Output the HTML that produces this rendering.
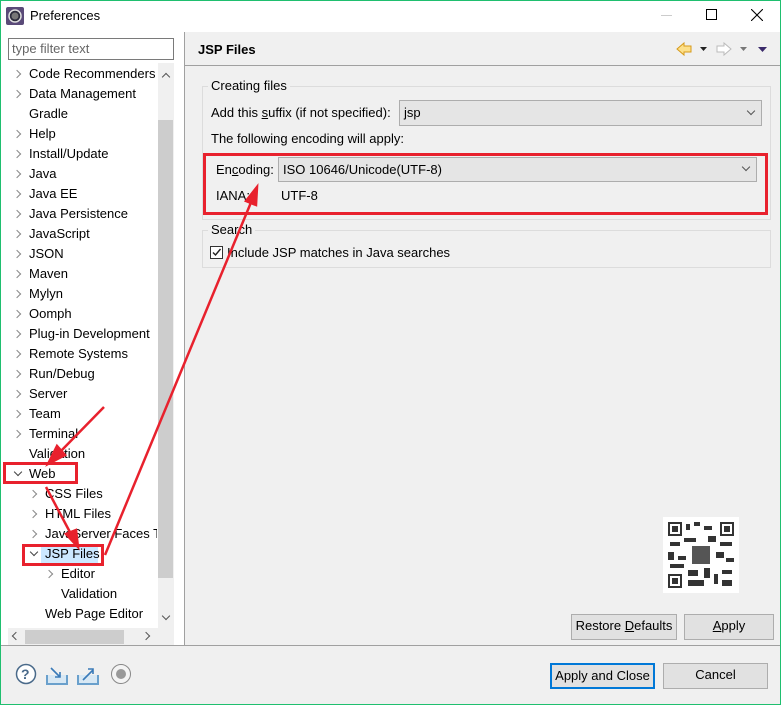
<!DOCTYPE html>
<html><head><meta charset="utf-8"><style>
*{margin:0;padding:0;box-sizing:border-box}
body{width:781px;height:705px;overflow:hidden;font-family:"Liberation Sans",sans-serif;font-size:13px;color:#000;background:#f0f0f0;position:relative}
.a{position:absolute;white-space:nowrap}
.chev{position:absolute;width:6px;height:6px;border-right:1.2px solid #888;border-bottom:1.2px solid #888}
.r{transform:rotate(-45deg)}
.d{transform:rotate(45deg)}
.btn{position:absolute;background:#e1e1e1;border:1px solid #adadad;text-align:center;line-height:22px}
u{text-decoration:underline}
</style></head><body>
<div class="a" style="left:1px;top:1px;width:779px;height:31px;background:#fff"></div>
<svg class="a" style="left:6px;top:7px" width="18" height="18"><rect x="0" y="0" width="18" height="18" rx="2" fill="#5a4a78"/><circle cx="9" cy="9" r="6" fill="#2c2c3c" stroke="#ddd" stroke-width="1.5"/><circle cx="9" cy="9" r="3.5" fill="#777"/></svg>
<div class="a" style="left:30px;top:8px;font-size:13px">Preferences</div>
<div class="a" style="left:661px;top:15px;width:11px;height:1px;background:#ccc"></div>
<div class="a" style="left:706px;top:9px;width:11px;height:11px;border:1px solid #000"></div>
<svg class="a" style="left:751px;top:9px" width="12" height="12"><path d="M0 0L12 12M12 0L0 12" stroke="#000" stroke-width="1.1"/></svg>
<!-- left pane -->
<div class="a" style="left:1px;top:32px;width:183px;height:613px;background:#fff"></div>
<div class="a" style="left:184px;top:32px;width:1px;height:613px;background:#a0a0a0"></div>
<div class="a" style="left:8px;top:38px;width:166px;height:22px;border:1px solid #7a7a7a;background:#fff;color:#666;padding-left:3px;line-height:20px">type filter text</div>
<div class="a" style="left:158px;top:63px;width:16px;height:565px;background:#f0f0f0"></div>
<div class="a" style="left:158px;top:120px;width:15px;height:458px;background:#cdcdcd"></div>
<div class="chev" style="left:163px;top:74px;transform:rotate(-135deg);border-color:#555"></div>
<div class="chev d" style="left:163px;top:613px;border-color:#555"></div>
<div class="a" style="left:8px;top:628px;width:166px;height:17px;background:#f0f0f0"></div>
<div class="a" style="left:25px;top:630px;width:99px;height:14px;background:#cdcdcd"></div>
<div class="chev" style="left:13px;top:633px;transform:rotate(135deg);border-color:#555"></div>
<div class="chev" style="left:143px;top:633px;transform:rotate(-45deg);border-color:#555"></div>
<div class="a" style="left:41px;top:545px;width:57px;height:18px;background:#cce8ff"></div>
<div id="tree"></div>
<script>
var items=[["Code Recommenders",1,0],["Data Management",1,0],["Gradle",0,0],["Help",1,0],["Install/Update",1,0],["Java",1,0],["Java EE",1,0],["Java Persistence",1,0],["JavaScript",1,0],["JSON",1,0],["Maven",1,0],["Mylyn",1,0],["Oomph",1,0],["Plug-in Development",1,0],["Remote Systems",1,0],["Run/Debug",1,0],["Server",1,0],["Team",1,0],["Terminal",1,0],["Validation",0,0],["Web",2,0],["CSS Files",1,1],["HTML Files",1,1],["JavaServer Faces Tools",1,1],["JSP Files",2,1],["Editor",1,2],["Validation",0,2],["Web Page Editor",0,1]];
var h="";items.forEach(function(it,i){var y=65+i*20,x=29+it[2]*16;
h+='<div class="a" style="left:'+x+'px;top:'+y+'px;width:'+(157-x)+'px;overflow:hidden;line-height:18px">'+it[0]+'</div>';
if(it[1]==1)h+='<div class="chev r" style="left:'+(x-15)+'px;top:'+(y+6)+'px"></div>';
if(it[1]==2)h+='<div class="chev d" style="left:'+(x-14)+'px;top:'+(y+4)+'px;border-color:#444"></div>';});
document.getElementById("tree").innerHTML=h;
</script>
<!-- right header -->
<div class="a" style="left:185px;top:32px;width:595px;height:34px;background:#f0f0f0;border-bottom:1px solid #a0a0a0"></div>
<div class="a" style="left:198px;top:42px;font-weight:bold;font-size:13px">JSP Files</div>
<svg class="a" style="left:676px;top:41px" width="100" height="16"><path d="M1 8L8 2V5H15V11H8V14Z" fill="#fde08a" stroke="#d69a1a"/><path d="M24 6h7l-3.5 4z" fill="#222"/><path d="M55 8L48 2V5H41V11H48V14Z" fill="#fff" stroke="#bbb"/><path d="M64 6h7l-3.5 4z" fill="#777"/><path d="M82 6h9l-4.5 5z" fill="#3a2a6a"/></svg>
<!-- Creating files group -->
<div class="a" style="left:202px;top:86px;width:569px;height:134px;border:1px solid #dcdcdc"></div>
<div class="a" style="left:208px;top:78px;background:#f0f0f0;padding:0 3px">Creating files</div>
<div class="a" style="left:211px;top:105px">Add this <u>s</u>uffix (if not specified):</div>
<div class="a" style="left:399px;top:100px;width:363px;height:26px;border:1px solid #adadad;background:#e5e5e5;padding-left:4px;line-height:24px">jsp</div>
<div class="chev d" style="left:748px;top:108px;border-color:#555"></div>
<div class="a" style="left:211px;top:131px">The following encoding will apply:</div>
<div class="a" style="left:216px;top:162px">En<u>c</u>oding:</div>
<div class="a" style="left:278px;top:157px;width:479px;height:25px;border:1px solid #adadad;background:#e5e5e5;padding-left:4px;line-height:23px">ISO 10646/Unicode(UTF-8)</div>
<div class="chev d" style="left:743px;top:164px;border-color:#555"></div>
<div class="a" style="left:216px;top:188px">IANA:</div>
<div class="a" style="left:281px;top:188px">UTF-8</div>
<div class="a" style="left:203px;top:153px;width:565px;height:62px;border:3px solid #e8212d"></div>
<!-- Search group -->
<div class="a" style="left:202px;top:230px;width:569px;height:38px;border:1px solid #dcdcdc"></div>
<div class="a" style="left:208px;top:222px;background:#f0f0f0;padding:0 3px">Search</div>
<div class="a" style="left:210px;top:246px;width:13px;height:13px;border:1px solid #333;background:#fff"></div>
<svg class="a" style="left:211px;top:247px" width="11" height="11"><path d="M2 5.5L4.5 8L9.5 2" stroke="#222" stroke-width="1.4" fill="none"/></svg>
<div class="a" style="left:227px;top:245px">Include JSP matches in Java searches</div>
<!-- QR -->
<div class="a" style="left:663px;top:517px;width:76px;height:76px;background:#fff"></div>
<svg class="a" style="left:668px;top:522px" width="66" height="66"><g fill="#333"><rect x="0" y="0" width="14" height="14"/><rect x="52" y="0" width="14" height="14"/><rect x="0" y="52" width="14" height="14"/></g><g fill="#fff"><rect x="2" y="2" width="10" height="10"/><rect x="54" y="2" width="10" height="10"/><rect x="2" y="54" width="10" height="10"/></g><g fill="#333"><rect x="4" y="4" width="6" height="6"/><rect x="56" y="4" width="6" height="6"/><rect x="4" y="56" width="6" height="6"/><rect x="18" y="2" width="4" height="6"/><rect x="26" y="0" width="6" height="4"/><rect x="36" y="4" width="8" height="4"/><rect x="2" y="20" width="10" height="4"/><rect x="16" y="16" width="12" height="4"/><rect x="40" y="14" width="8" height="6"/><rect x="52" y="20" width="12" height="4"/><rect x="0" y="30" width="6" height="8"/><rect x="10" y="34" width="8" height="4"/><rect x="48" y="30" width="8" height="6"/><rect x="58" y="36" width="8" height="4"/><rect x="2" y="42" width="14" height="4"/><rect x="20" y="48" width="10" height="6"/><rect x="36" y="46" width="6" height="10"/><rect x="46" y="52" width="4" height="10"/><rect x="54" y="48" width="10" height="4"/><rect x="20" y="58" width="16" height="6"/><rect x="54" y="58" width="10" height="6"/><rect x="24" y="24" width="18" height="18" fill="#555"/></g></svg>
<div class="btn" style="left:571px;top:614px;width:106px;height:26px">Restore <u>D</u>efaults</div>
<div class="btn" style="left:684px;top:614px;width:90px;height:26px"><u>A</u>pply</div>
<!-- bottom -->
<div class="a" style="left:1px;top:645px;width:779px;height:1px;background:#a0a0a0"></div>
<svg class="a" style="left:15px;top:663px" width="120" height="24"><circle cx="11" cy="11" r="9.5" fill="#fff" stroke="#4a6a8a" stroke-width="1.5"/><text x="6" y="16" font-family="Liberation Sans" font-size="14" font-weight="bold" fill="#4a6a8a">?</text><path d="M32 12v9h20v-9" stroke="#6aa0cc" stroke-width="2" fill="#d8e8f4"/><path d="M36 5l9 9M45 9v5h-5" stroke="#3a7ab8" stroke-width="1.6" fill="none"/><path d="M63 12v9h20v-9" stroke="#6aa0cc" stroke-width="2" fill="#d8e8f4"/><path d="M68 17l10-10M73 6h5v5" stroke="#3a7ab8" stroke-width="1.6" fill="none"/><circle cx="106" cy="11" r="9.5" fill="#f4f4f4" stroke="#888"/><circle cx="106" cy="11" r="5" fill="#999"/></svg>
<div class="btn" style="left:550px;top:663px;width:105px;height:26px;border:2px solid #0078d7;line-height:22px">Apply and Close</div>
<div class="btn" style="left:663px;top:663px;width:105px;height:26px">Cancel</div>
<!-- red annotations -->
<div class="a" style="left:3px;top:462px;width:75px;height:22px;border:3px solid #e8212d"></div>
<div class="a" style="left:22px;top:544px;width:82px;height:22px;border:3px solid #e8212d"></div>
<svg class="a" style="left:0;top:0" width="781" height="705"><g stroke="#e8212d" stroke-width="2.5" fill="#e8212d"><path d="M104 407L60 452"/><path d="M48 464L57 446L65 455Z"/><path d="M46 487L72 536"/><path d="M78 547L66 534L76 530Z"/><path d="M105 555L252 200"/><path d="M257 187L256 205L246 201Z"/></g></svg>
<div class="a" style="left:0;top:0;width:781px;height:705px;border:1px solid #1fbf6f"></div>
</body></html>
